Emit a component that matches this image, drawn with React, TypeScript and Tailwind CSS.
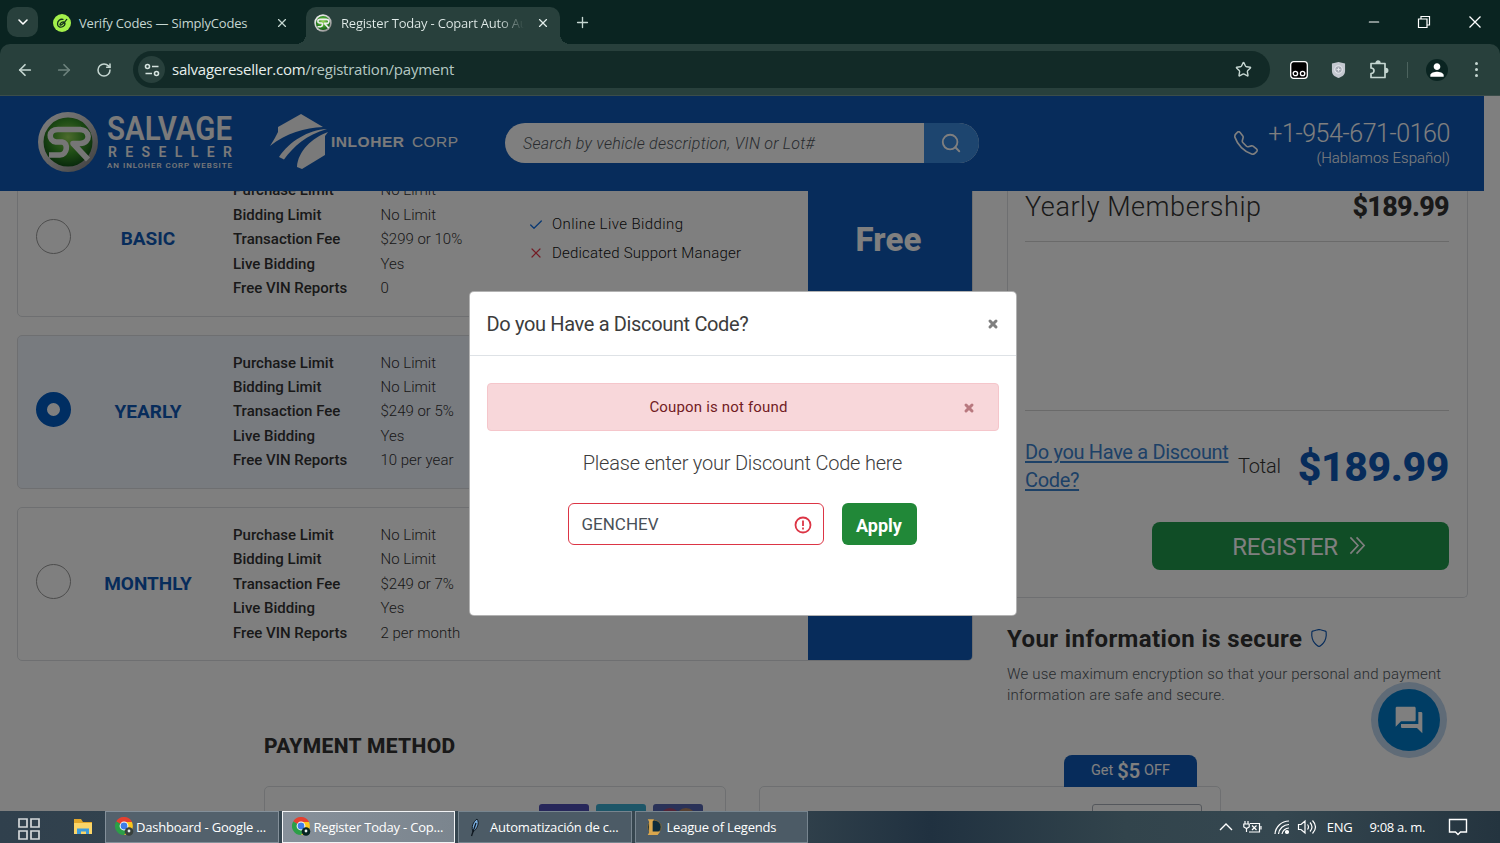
import React from 'react';
import {
  ArrowLeft,
  ArrowRight,
  Check,
  ChevronDown,
  Minus,
  Plus,
  RotateCw,
  Search,
  Star,
  X,
} from 'lucide-react';
import { BsShield, BsTelephone } from 'react-icons/bs';
import { MdPerson, MdQuestionAnswer } from 'react-icons/md';

interface Plan {
  name: string;
  selected: boolean;
  fee: string;
  reports: string;
}

const plans: Plan[] = [
  { name: 'BASIC', selected: false, fee: '$299 or 10%', reports: '0' },
  { name: 'YEARLY', selected: true, fee: '$249 or 5%', reports: '10 per year' },
  { name: 'MONTHLY', selected: false, fee: '$249 or 7%', reports: '2 per month' },
];

const SrBadge: React.FC<{ className: string }> = ({ className }) => (
  <svg viewBox="0 0 62 62" className={className}>
    <defs>
      <linearGradient id="srRing" x1="0" y1="0" x2="1" y2="1">
        <stop offset="0" stopColor="#fff" />
        <stop offset="0.55" stopColor="#c4c4c4" />
        <stop offset="1" stopColor="#777" />
      </linearGradient>
      <radialGradient id="srGreen" cx="0.5" cy="0.4" r="0.6">
        <stop offset="0" stopColor="#9ad65a" />
        <stop offset="0.55" stopColor="#3d9a2a" />
        <stop offset="1" stopColor="#125417" />
      </radialGradient>
    </defs>
    <circle cx="31" cy="31" r="30" fill="url(#srRing)" />
    <circle cx="31" cy="31" r="24.500" fill="url(#srGreen)" />
    <path
      d="M44 18.500H21c-10 0-10 11-2 12.500h6c7 1 5 13-2 13H12M30 18.500h12c12 0 12 14 1 14h-7l15 16"
      fill="none"
      stroke="#ededed"
      strokeWidth="5.6"
      strokeLinejoin="round"
    />
  </svg>
);

const ChromeLogo: React.FC<{ badge: string }> = ({ badge }) => (
  <svg viewBox="0 0 20 20" className="h-5 w-5 shrink-0">
    <path d="M9 9 1.2 4.5A9 9 0 0 1 16.8 4.5L17 5H9z" fill="#e5402f" />
    <path d="M9 9V5h7.9A9 9 0 0 1 9 18l4-7z" fill="#fcc61d" />
    <path d="M9 9 1.2 4.5A9 9 0 0 0 9 18l4-7z" fill="#2c9f47" />
    <circle cx="9" cy="9" r="4.4" fill="#fff" />
    <circle cx="9" cy="9" r="3.4" fill="#3f7de8" />
    <circle cx="14" cy="14.5" r="4.3" fill={badge} />
    <circle cx="14" cy="14" r="1.4" fill="#e9f1ee" />
  </svg>
);

function TabStrip() {
  return (
    <div className="flex h-11 shrink-0 items-end bg-[#0a2421] text-[13px] text-[#c5d6d1]">
      <div className="mb-[7px] ml-[7px] flex h-[30px] w-[31px] items-center justify-center rounded-[10px] bg-[#28403c]">
        <ChevronDown className="h-4 w-4 text-white" strokeWidth={2.4} />
      </div>
      <div className="flex h-[37px] w-[268px] items-center pb-[5px] pl-[15px]">
        <svg viewBox="0 0 18 18" className="h-[18px] w-[18px]">
          <circle cx="9" cy="9" r="9" fill="#a3f04b" />
          <path
            d="M10.500 5.500C7 4.500 4.500 7 4.500 10s3 4 5.500 2.500 2.500-4 1-4.500-4 1-4 2.500 3 .5 7-5.500"
            fill="none"
            stroke="#12301b"
            strokeWidth="1.3"
          />
        </svg>
        <span className="ml-2 mt-0.5 whitespace-nowrap tracking-[-0.17px]">Verify Codes — SimplyCodes</span>
        <X className="ml-auto mr-[17px] h-[14px] w-[14px]" />
      </div>
      <div className="relative flex h-[37px] w-[254px] items-center rounded-t-[10px] bg-[#28403c] pb-[5px] pl-2 text-[#e2ecea]">
        <div className="absolute -left-2.5 bottom-0 h-2.5 w-2.5 bg-[radial-gradient(circle_at_0_0,#0a2421_10px,#28403c_10px)]" />
        <div className="absolute -right-2.5 bottom-0 h-2.5 w-2.5 bg-[radial-gradient(circle_at_100%_0,#0a2421_10px,#28403c_10px)]" />
        <SrBadge className="h-[18px] w-[18px]" />
        <span className="ml-[9px] mt-0.5 w-[183px] overflow-hidden whitespace-nowrap bg-[linear-gradient(90deg,#e2ecea_86%,#28403c)] bg-clip-text tracking-[-0.2px] text-transparent">
          Register Today - Copart Auto Au
        </span>
        <X className="ml-auto mr-[10px] h-[14px] w-[14px]" />
      </div>
      <Plus className="mb-[13px] ml-[14px] h-[17px] w-[17px]" strokeWidth={1.9} />
      <div className="mb-[14px] ml-auto mr-[18px] flex items-center text-white">
        <Minus className="mr-[35px] h-4 w-4" strokeWidth={1.8} />
        <svg viewBox="0 0 14 14" className="mr-[37px] h-[14px] w-[14px]" fill="none" stroke="#fff" strokeWidth="1.2">
          <path d="M1.5 4h8.500v8.500h-8.500zM4 4V1.500h8.500V10H10" />
        </svg>
        <svg viewBox="0 0 14 14" className="h-[14px] w-[14px]" stroke="#fff" strokeWidth="1.3">
          <path d="m1.500 1.500 11 11m0-11-11 11" />
        </svg>
      </div>
    </div>
  );
}

function Toolbar() {
  return (
    <div className="shrink-0 bg-[#0a2421]">
      <div className="flex h-[52px] items-center rounded-t-[10px] border-b border-[#3b4d4a] bg-[#28403c] text-[#c5d6d1]">
        <ArrowLeft className="ml-4 h-[18px] w-[18px]" strokeWidth={2.3} />
        <ArrowRight className="ml-[21px] h-[18px] w-[18px] text-[#6d827d]" strokeWidth={2.3} />
        <RotateCw className="ml-[23px] h-4 w-4" strokeWidth={2.3} />
        <div className="ml-[21px] flex h-[37px] w-[1137px] items-center rounded-full bg-[#122a27]">
          <div className="ml-[5px] flex h-[27px] w-[27px] items-center justify-center rounded-full bg-[#28403c]">
            <svg viewBox="0 0 16 16" className="h-4 w-4" fill="none" stroke="#d5e3df" strokeWidth="1.6">
              <circle cx="3.500" cy="4.500" r="2" />
              <path d="M8 4.500h6.500M1.500 11.500H8" />
              <circle cx="12.500" cy="11.500" r="2" />
            </svg>
          </div>
          <p className="ml-[7px] text-[15px] tracking-[-0.24px] text-[#b5c8c3]">
            <span className="text-[#e6efec]">salvagereseller.com</span>/registration/payment
          </p>
          <Star className="ml-auto mr-[18px] h-[17px] w-[17px]" />
        </div>
        <svg viewBox="0 0 18 18" className="ml-5 h-[18px] w-[18px]">
          <rect x="0.700" y="0.700" width="16.600" height="16.600" rx="3" fill="#000" stroke="#fff" strokeWidth="1.300" />
          <circle cx="5.400" cy="12.500" r="2.200" fill="none" stroke="#fff" strokeWidth="1.300" />
          <circle cx="12.600" cy="12.500" r="2.200" fill="none" stroke="#fff" strokeWidth="1.300" />
        </svg>
        <svg viewBox="0 0 16 18" className="ml-[23px] h-[18px] w-[15px]">
          <path d="M8 .5 15 2v8c0 4-3 6-7 7.500C4 16 1 14 1 10V2z" fill="#c4c8d0" />
          <circle cx="8" cy="8.500" r="4" fill="#a6abb5" stroke="#e4e6eb" strokeWidth="1.200" />
          <path d="M6 8.500h4M8 6.500v4" stroke="#e4e6eb" />
        </svg>
        <svg viewBox="0 0 20 20" className="ml-[23px] h-5 w-5" fill="none" stroke="#c5d6d1" strokeWidth="1.700">
          <path d="M2 3.500h14v14H2v-4c4 0 4-5.500 0-5.500z" strokeLinejoin="round" />
          <path d="M7.200 3a1.800 1.800 0 0 1 3.600 0zM16.800 8.700a1.800 1.800 0 0 1 0 3.600z" fill="#c5d6d1" />
        </svg>
        <div className="ml-[18px] h-4 w-px bg-[#4c635e]" />
        <div className="ml-[18px] flex h-[22px] w-[22px] items-center justify-center rounded-full bg-[#0a2421]">
          <MdPerson className="h-[20px] w-[20px] text-white" />
        </div>
        <div className="ml-[27px] flex flex-col gap-[3px]">
          <i className="h-[3px] w-[3px] rounded-full bg-[#c5d6d1]" />
          <i className="h-[3px] w-[3px] rounded-full bg-[#c5d6d1]" />
          <i className="h-[3px] w-[3px] rounded-full bg-[#c5d6d1]" />
        </div>
      </div>
    </div>
  );
}

function SiteHeader() {
  return (
    <header className="relative z-10 flex h-[94.500px] w-[1484px] shrink-0 items-center bg-[#0f59b6] text-white">
      <SrBadge className="mb-0.5 ml-[37px] h-[62px] w-[62px]" />
      <svg viewBox="0 0 126 56" className="mb-0.5 ml-2 h-14 w-[126px] overflow-visible font-['Roboto',sans-serif]" fill="#f4f4f4">
        <text x="0" y="26" fontSize="34" fontWeight="600" textLength="125" lengthAdjust="spacingAndGlyphs">SALVAGE</text>
        <text x="1" y="42.500" fontSize="14" fontWeight="600" textLength="124" lengthAdjust="spacing">RESELLER</text>
        <text x="0" y="53.500" fontSize="8" fontWeight="500" textLength="125" lengthAdjust="spacing">AN INLOHER CORP WEBSITE</text>
      </svg>
      <svg viewBox="0 0 60 56" className="mb-[3px] ml-[37px] h-14 w-[60px]" fill="#f4f4f4">
        <path d="M0 32C4 26 6 22 8 18V13L31 0l22 13C35 14 16 19 0 32z" />
        <path d="M57 15C38 16 20 27 9 43l5 2.500C24 32 36 21 57 15z" />
        <path d="M58 18C42 24 28 37 27 53l5 2 23-14V22z" />
      </svg>
      <svg viewBox="0 0 128 20" className="mb-[3px] ml-px h-5 w-32 font-['Liberation_Sans',sans-serif]" fill="#f4f4f4">
        <text x="0" y="15" fontSize="15.500" fontWeight="700" textLength="73" lengthAdjust="spacing">INLOHER</text>
        <text x="81" y="15" fontSize="15.500" textLength="46" lengthAdjust="spacing">CORP</text>
      </svg>
      <div className="ml-[46px] flex h-10 w-[474px] overflow-hidden rounded-full bg-white">
        <div className="flex flex-1 items-center pl-[18px] pt-0.5 text-[16px] font-light italic tracking-[0.25px] text-[#50575d]">
          Search by vehicle description, VIN or Lot#
        </div>
        <div className="flex w-[55px] items-center justify-center bg-[#3b8ade]">
          <Search className="mr-0.5 h-[22px] w-[22px]" strokeWidth={2} />
        </div>
      </div>
      <BsTelephone className="ml-auto mt-[-1px] h-6 w-6" />
      <div className="ml-[10px] mr-[34px] pt-0.5 text-right">
        <p className="text-[25px] font-light leading-7 tracking-[-0.43px]">+1-954-671-0160</p>
        <p className="text-[15px] font-light leading-5">(Hablamos Español)</p>
      </div>
    </header>
  );
}

const PlanCard: React.FC<{ plan: Plan }> = ({ plan }) => {
  const rows = [
    ['Purchase Limit', 'No Limit'],
    ['Bidding Limit', 'No Limit'],
    ['Transaction Fee', plan.fee],
    ['Live Bidding', 'Yes'],
    ['Free VIN Reports', plan.reports],
  ];

  return (
    <div
      className={`flex h-[154.300px] overflow-hidden rounded-[5px] border border-[#dcdfe3] ${
        plan.selected ? 'bg-[#f1f6ff]' : 'bg-white'
      }`}
    >
      <div className="flex w-[71px] items-center justify-center pb-[5px]">
        {plan.selected ? (
          <div className="h-[35px] w-[35px] rounded-full border-[11px] border-[#005cc5] bg-white" />
        ) : (
          <div className="h-[35px] w-[35px] rounded-full border border-[#999]" />
        )}
      </div>
      <div className="flex w-[118px] items-center justify-center text-[19px] font-bold text-[#0f59b6]">{plan.name}</div>
      <dl className="ml-[26px] mt-[15px] text-[15px] leading-[24.400px] text-[#333]">
        {rows.map(([label, value]) => (
          <div key={label} className="flex">
            <dt className="w-[147.500px] font-medium">{label}</dt>
            <dd className="w-[147.500px] font-light">{value}</dd>
          </div>
        ))}
      </dl>
      {plan.name === 'BASIC' && (
        <ul className="mt-[47px] text-[15px] font-light leading-[28.500px] tracking-[0.2px] text-[#111]">
          <li className="flex items-center gap-2">
            <Check className="h-4 w-4 text-[#1673e6]" strokeWidth={2} />
            <span className="tracking-[0.4px]">Online Live Bidding</span>
          </li>
          <li className="flex items-center gap-2">
            <X className="h-4 w-4 text-[#e8384a]" strokeWidth={1.8} />
            Dedicated Support Manager
          </li>
        </ul>
      )}
      <div className="-my-px -mr-px ml-auto w-[165px] bg-[#0f59b6] pr-1 pt-[58px] text-center text-[33px] font-extrabold leading-10 tracking-[0.1px] text-white">
        {plan.name === 'BASIC' && 'Free'}
      </div>
    </div>
  );
};

function Summary() {
  return (
    <aside className="w-[461px]">
      <div className="h-[407.500px] rounded-b-[5px] border border-t-0 border-[#dcdfe3] pl-[17px] pr-[18px] text-[#333]">
        <div className="flex h-[51px] justify-between border-b border-[#d4d4d4] text-[27px] leading-[33px]">
          <span className="font-light tracking-[0.55px]">Yearly Membership</span>
          <span className="font-extrabold tracking-[-0.7px]">$189.99</span>
        </div>
        <div className="h-[169px] border-b border-[#d4d4d4]" />
        <div className="mt-[27px] flex h-[57px] items-center">
          <a className="w-[213px] text-[20px] leading-[28.500px] tracking-[-0.34px] text-[#3b82cf] underline underline-offset-2">
            Do you Have a Discount Code?
          </a>
          <span className="text-[20px] font-light tracking-[-0.2px]">Total</span>
          <span className="ml-auto pt-1 text-[41px] font-extrabold tracking-[-0.4px] text-[#0f59b6]">$189.99</span>
        </div>
        <button className="ml-auto mt-[27px] flex h-[48px] w-[297px] items-center justify-center gap-[11px] rounded-lg bg-[#209a4c] pr-[3px] pt-0.5 text-[24px] tracking-[-0.35px] text-white">
          REGISTER
          <svg viewBox="0 0 17 20" className="-mt-0.5 h-[19px] w-[17px]" fill="none" stroke="currentColor" strokeWidth="1.700">
            <path d="m1 1.500 8 8.500-8 8.500M7.500 1.500l8 8.500-8 8.500" />
          </svg>
        </button>
      </div>
      <h3 className="mt-[25px] flex items-center gap-2 whitespace-nowrap text-[24px] font-bold leading-8 tracking-[0.4px] text-[#333]">
        Your information is secure
        <BsShield className="-mt-0.5 h-[18px] w-[18px] text-[#0f59b6]" />
      </h3>
      <p className="mt-[9px] whitespace-nowrap text-[15px] font-light leading-[21px] tracking-[0.19px] text-[#50575d]">
        We use maximum encryption so that your personal and payment
        <br />
        information are safe and secure.
      </p>
    </aside>
  );
}

function PaymentMethod() {
  return (
    <section className="w-[956px] pl-[264px]">
      <h3 className="text-[21px] font-extrabold leading-7 tracking-[0.35px] text-[#333]">PAYMENT METHOD</h3>
      <div className="mt-[26px] flex gap-[33px]">
        <div className="flex h-20 w-[462px] shrink-0 justify-end gap-[7px] rounded-[5px] border border-[#dcdfe3] pr-[22px] pt-[17px]">
          <div className="h-8 w-[50px] rounded-[3px] bg-[#4f4fb5]" />
          <div className="h-8 w-[50px] rounded-[3px] bg-[#3badd1]" />
          <div className="flex h-8 w-[50px] items-start justify-center rounded-[3px] bg-[#5465b0] pt-1">
            <i className="h-5 w-5 rounded-full bg-[#a8466b]" />
            <i className="-ml-1 h-5 w-5 rounded-full bg-[#b28263]" />
          </div>
        </div>
        <div className="relative h-20 w-[462px] shrink-0 rounded-[5px] border border-[#dcdfe3]">
          <div className="absolute -top-8 right-[23px] flex h-8 w-[133px] items-center justify-center gap-1 rounded-t-lg bg-[#0f59b6] text-[14.500px] text-white">
            Get <b className="text-[20px] font-semibold">$5</b> OFF
          </div>
          <div className="ml-auto mr-[18px] mt-[17px] h-8 w-[110px] rounded-[3px] border border-[#a9afb8]" />
        </div>
      </div>
    </section>
  );
}

function DiscountModal() {
  return (
    <div className="absolute inset-0 z-20 bg-black/50 pl-[469px] pt-[195px]">
      <div className="h-[325px] w-[548px] rounded-[5px] border border-black/30 bg-white text-[#3c3c3c]">
        <div className="flex h-[64px] items-center justify-between border-b border-[#dee2e6] pl-[16.500px] pr-[17px]">
          <h2 className="text-[20px] tracking-[-0.35px]">Do you Have a Discount Code?</h2>
          <X className="h-3 w-3 text-[#7f7f7f]" strokeWidth={6} />
        </div>
        <div className="pl-[17px] pr-[17px] pt-[26.500px]">
          <div className="flex h-[48.500px] items-center rounded-[4px] border border-[#f5c6cb] bg-[#f8d7da] text-[#721c24]">
            <p className="flex-1 pr-[14px] text-center text-[15px] tracking-[0.17px]">Coupon is not found</p>
            <X className="mr-[23px] mt-0.5 h-3 w-3 text-[#b8797f]" strokeWidth={6} />
          </div>
          <p className="mt-[18px] pr-px text-center text-[20px] font-light leading-7 tracking-[-0.22px]">
            Please enter your Discount Code here
          </p>
          <div className="mt-[26px] flex justify-center gap-[18px] pr-[2px]">
            <div className="flex h-[42px] w-[256px] items-center justify-between rounded-md border border-[#dc3545] pl-[13px] pr-[11px] pt-px text-[17px] text-[#495057]">
              GENCHEV
              <svg viewBox="0 0 18 18" className="h-[18px] w-[18px]" fill="none" stroke="#dc3545" strokeWidth="1.800">
                <circle cx="9" cy="9" r="7.500" />
                <path d="M9 4.500v5.500M9 11.500v2" />
              </svg>
            </div>
            <button className="h-[42px] w-[75px] rounded-md bg-[#218838] pt-0.5 text-[18px] font-bold text-white">Apply</button>
          </div>
        </div>
      </div>
    </div>
  );
}

const taskClass =
  'flex h-8 w-[173.500px] shrink-0 items-center border pl-[9px] text-[13px] whitespace-nowrap tracking-[-0.2px] text-white';

function Taskbar() {
  return (
    <footer className="flex h-8 shrink-0 items-center bg-[linear-gradient(90deg,#30404d_0%,#35454f_20%,#36464f_50%,#203140_62%,#32444c_75%,#354750_85%,#24343f_100%)] text-white">
      <svg viewBox="0 0 22 22" className="ml-[18px] mt-[3px] h-[22px] w-[22px]" fill="none" stroke="#d4d8da" strokeWidth="1.700">
        <path d="M1 1h8v8H1zM13 1h8v8h-8zM1 13h8v8H1zM13 13h8v8h-8z" />
      </svg>
      <svg viewBox="0 0 20 18" className="ml-[33px] h-[18px] w-5">
        <path d="M1 1h7l2 3h9v12H1z" fill="#e2a72a" />
        <path d="M1 5h18v11H1z" fill="#fbd568" />
        <path d="M4 16v-5.500h12V16h-3v-2.500H8V16z" fill="#3d9bdc" />
      </svg>
      <div className="ml-[12px] flex gap-[3px]">
        <div className={`${taskClass} border-[#84909a] bg-[#53616c]`}>
          <ChromeLogo badge="#37403c" />
          <span className="ml-px mt-px">Dashboard - Google ...</span>
        </div>
        <div className={`${taskClass} border-[#f1f3f5] bg-[linear-gradient(90deg,#87909a,#7b858e)]`}>
          <ChromeLogo badge="#062422" />
          <span className="ml-0.5 mt-px">Register Today - Cop...</span>
        </div>
        <div className={`${taskClass} border-[#77858f] bg-[#4c5b66]`}>
          <svg viewBox="0 0 20 20" className="-ml-1 mr-1 h-5 w-5">
            <path d="M13 2c3 4 0 10-4 13C7 10 9 5 13 2z" fill="#79adde" stroke="#101820" />
            <path d="M12 6 7.500 19" stroke="#101820" strokeWidth="1.300" />
          </svg>
          <span className="ml-[2px] mt-px">Automatización de c...</span>
        </div>
        <div className={`${taskClass} border-[#77858f] bg-[#4c5b66]`}>
          <svg viewBox="0 0 20 20" className="h-[18px] w-[18px]">
            <circle cx="10.500" cy="10" r="7.500" fill="#0d2b3b" stroke="#826b3a" />
            <path d="M3 1.500h7l-1.500 2.500v11H17L14 19H3l1.500-2.500V4z" fill="#d9a64d" />
          </svg>
          <span className="ml-[4px] mt-px">League of Legends</span>
        </div>
      </div>
      <div className="ml-auto mr-[32px] flex items-center text-[13px] tracking-[-0.3px]">
        <svg viewBox="0 0 14 8" className="h-2 w-[14px]" fill="none" stroke="#fff" strokeWidth="1.400">
          <path d="m1 7 6-6 6 6" />
        </svg>
        <svg viewBox="0 0 19 14" className="ml-2.5 h-[14px] w-[19px]" fill="none" stroke="#fff" strokeWidth="1.200">
          <path d="M2 1v3M5 1v3M.8 4h5.400v3L3.500 8.500.8 7zM3.500 8.500V12M7 3.500h9.500V12H6M18 6v3.500M9 5.500l4.500 4.500m0-4.500L9 10" />
        </svg>
        <svg viewBox="0 0 16 16" className="ml-3 h-4 w-4" fill="none" stroke="#fff" strokeWidth="1.200">
          <path d="M1 15A14 14 0 0 1 15 2M4.500 15A10.500 10.500 0 0 1 15 5.500M8 15a7 7 0 0 1 7-6" />
          <circle cx="13" cy="13" r="1.500" fill="#fff" />
        </svg>
        <svg viewBox="0 0 20 16" className="ml-[7px] h-4 w-5" fill="none" stroke="#fff" strokeWidth="1.200">
          <path d="M1.500 5.500H4L8 2v12l-4-3.500H1.500zM10.500 5.500q2 2.500 0 5M13 3.500q4 4.500 0 9M15.500 1.500q6 6.500 0 13" />
        </svg>
        <span className="ml-[10px] mt-px">ENG</span>
        <span className="ml-[17px] mt-px">9:08 a. m.</span>
        <svg viewBox="0 0 20 18" className="ml-[23px] h-[18px] w-5" fill="none" stroke="#fff" strokeWidth="1.400">
          <path d="M1.500 1.500h17v12.500h-6L10 16.500 7.500 14h-6z" />
        </svg>
      </div>
    </footer>
  );
}

export default function App() {
  return (
    <div className="flex h-[843px] w-[1500px] flex-col overflow-hidden bg-white font-['Open_Sans',sans-serif]">
      <TabStrip />
      <Toolbar />
      <div className="relative flex min-h-0 flex-1 flex-col overflow-hidden font-['Roboto',sans-serif]">
        <SiteHeader />
        <main className="flex h-[541.500px] shrink-0 gap-[34px] pl-[17px]">
          <div className="-mt-[28.200px] flex w-[956px] flex-col gap-[18px]">
            {plans.map((plan) => (
              <PlanCard key={plan.name} plan={plan} />
            ))}
          </div>
          <Summary />
        </main>
        <PaymentMethod />
        <div className="absolute right-[53px] top-[586px] flex h-[76px] w-[76px] items-center justify-center rounded-full bg-[#bfd6ee]">
          <div className="flex h-[62px] w-[62px] items-center justify-center rounded-full bg-[#007bc8]">
            <MdQuestionAnswer className="h-8 w-8 text-white" />
          </div>
        </div>
        <DiscountModal />
      </div>
      <Taskbar />
    </div>
  );
}
